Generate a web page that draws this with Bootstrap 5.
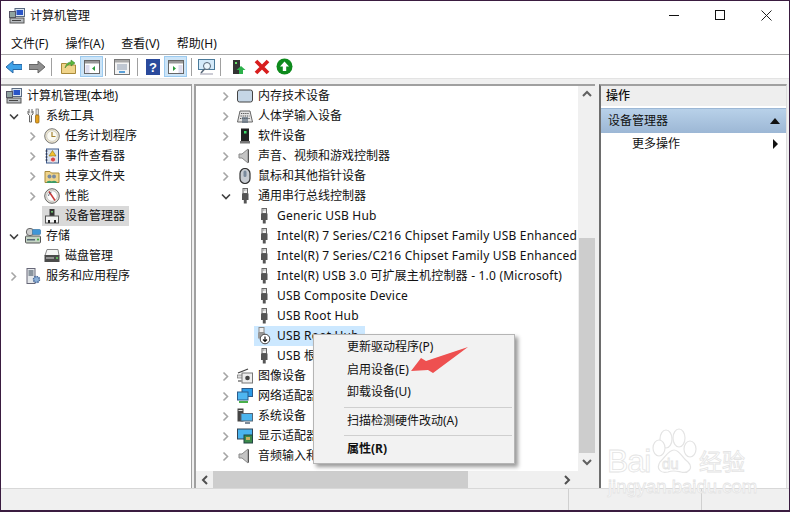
<!DOCTYPE html>
<html lang="zh-CN">
<head>
  <meta charset="UTF-8" />
  <title>计算机管理</title>
  <link href="https://cdn.jsdelivr.net/npm/bootstrap@5.3.0/dist/css/bootstrap.min.css" rel="stylesheet"/>
  <style>
    html, body { margin: 0; background: #fff; overflow: hidden; }
    body { font: 12px/20px "Noto Sans", "Noto Sans CJK SC", sans-serif; color: #111; }
    .win { position: relative; width: 790px; height: 512px; border: solid #3a1c40; border-width: 1px 1px 2px 1px; background: #fff; overflow: hidden; }
    svg { display: block; flex: none; }
    .title-bar { height: 31px; padding-bottom: 2px; }
    .title-ico { margin: 0 5px 0 8px; }
    .win-btns { margin-left: auto; }
    .win-btn { width: 46px; height: 29px; }
    .menu-bar { height: 21px; padding: 1px 0 0 10px; gap: 17px; border-bottom: 1px solid #aaa; box-sizing: content-box; }
    .tool-bar { height: 23px; padding-left: 4px; border-bottom: 1px solid #e3e3e3; box-sizing: content-box; }
    .t-sep { width: 1px; height: 18px; background: #a0a0a0; flex: none; }
    .t-on { width: 23px; height: 21px; background: #cce4f7; border: 1px solid #9ccbf0; flex: none; }
    .tm1 { margin-left: 1px; } .tm2 { margin-left: 2px; } .tm4 { margin-left: 4px; } .tm5 { margin-left: 5px; } .tm6 { margin-left: 6px; }
    .tm7 { margin-left: 7px; } .tm8 { margin-left: 8px; } .tm9 { margin-left: 9px; } .tm11 { margin-left: 11px; }
    .panes { height: 404px; padding-top: 5px; box-sizing: content-box; background: #f0f0f0; }
    .pane { background: #fff; border-top: 2px solid #a0a0a0; position: relative; flex: none; }
    .pane-l { width: 191px; border-right: 1px solid #a0a0a0; padding-left: 2px; }
    .pane-m { width: 401px; margin-left: 2px; border-left: 2px solid #a0a0a0; display: flex; flex-direction: column; }
    .pane-r { width: 188px; margin-left: 4px; border-left: 2px solid #6d6d6d; border-right: 1px solid #ddd; }
    .t-row { height: 20px; white-space: nowrap; }
    .twist { width: 16px; height: 20px; flex: none; }
    .r-l0 { padding-left: 3px; } .r-l1 { padding-left: 3px; } .r-l2 { padding-left: 22px; }
    .ico-gap { margin-left: 3px; margin-right: 5px; }
    .r-l0 .ico-gap { margin-left: 0; margin-right: 5px; }
    .sel-g { background: #d9d9d9; display: flex; align-items: center; height: 20px; margin-left: 1px; padding: 0 4px 0 2px; }
    .sel-g svg { margin-right: 5px; }
    .m-body { flex: 1; display: flex; min-height: 0; }
    .m-tree { flex: 1; overflow: hidden; }
    .r-p { padding-left: 22px; } .r-c { padding-left: 60px; }
    .c-wrap { display: flex; align-items: center; height: 20px; letter-spacing: .2px; }
    .c-wrap svg { margin-right: 5px; }
    .sel-b { background: #cce8ff; margin-left: -2px; padding: 0 4px 0 2px; width: 111px; }
    .v-bar { width: 17px; background: #f0f0f0; display: flex; flex-direction: column; align-items: center; }
    .v-up { height: 152px; padding-top: 4px; width: 100%; display: flex; justify-content: center; }
    .v-thumb { height: 215px; width: 16px; background: #cdcdcd; }
    .v-dn { padding-top: 5px; }
    .h-bar { height: 17px; background: #f0f0f0; display: flex; align-items: center; }
    .h-l { width: 17px; display: flex; justify-content: center; }
    .h-thumb { width: 255px; height: 17px; background: #cdcdcd; }
    .act-head { height: 20px; background: #eee; padding-left: 5px; font-weight: 500; margin-bottom: 2px; }
    .act-band { height: 25px; background: linear-gradient(#b8d1e9, #9cb7d5); padding: 0 6px 0 7px; border-top: 1px solid #9cb7d5; }
    .act-item { height: 22px; padding: 0 8px 0 31px; }
    .status { height: 22px; background: #f0f0f0; border-top: 1px solid #d8d8d8; }
    .st-a { width: 567px; } .st-b { width: 134px; border-left: 1px solid #d0d0d0; border-right: 1px solid #d0d0d0; }
    .ctx { position: absolute; left: 312px; top: 333px; width: 202px; height: 130px; background: #f2f2f2; border: 1px solid #b5b5b5; box-shadow: 3px 3px 4px rgba(0,0,0,.4); padding-top: 1px; }
    .ctx-it { padding-left: 33px; height: 22.5px; line-height: 22px; }
    .ctx-sep { height: 1px; background: #cfcfcf; margin: 3px 2px 2px 30px; }
    .ctx-b { font-weight: 700; }
    .red-arrow { position: absolute; left: 405px; top: 340px; }
    .wm { position: absolute; left: 603px; top: 425px; width: 150px; height: 70px; }
    .wm-t { position: absolute; color: #fff; -webkit-text-stroke: .8px #e4e4e4; font-family: "Liberation Sans", sans-serif; white-space: nowrap; }
    .wm-bai { left: 3px; top: 23px; font-size: 32px; line-height: 24px; letter-spacing: -1px; }
    .wm-du { left: 58px; top: 31px; font-size: 15px; line-height: 14px; }
    .wm-jy { left: 95px; top: 22px; font-size: 23px; line-height: 24px; font-family: "Noto Sans CJK SC", sans-serif; }
    .wm-url { left: 4px; top: 54px; font-size: 18.5px; line-height: 14px; }
    .wm-paw { position: absolute; left: 48px; top: 2px; }
  </style>
</head>
<body>
  <svg width="0" height="0" style="position:absolute">
    <defs>
      <symbol id="i-chev-r" viewBox="0 0 16 20"><path d="M5.5 6.500 9.500 10.500 5.500 14.500" fill="none" stroke="#a6a6a6" stroke-width="1.6"/></symbol>
      <symbol id="i-chev-d" viewBox="0 0 16 20"><path d="M4 8.500 8 12.500 12 8.500" fill="none" stroke="#404040" stroke-width="1.6"/></symbol>
      <symbol id="i-comp" viewBox="0 0 16 16"><rect x="6" y=".5" width="9.500" height="8" fill="#dfe8f2" stroke="#5a6a80"/><rect x="7.500" y="2" width="6.500" height="5" fill="#2a55c8"/><rect x=".5" y="3.500" width="6" height="6" fill="#8fa3a0" stroke="#556"/><rect x="1" y="10" width="14" height="5" fill="#b8bcc0" stroke="#555"/><rect x="3" y="12" width="9" height="1" fill="#444"/></symbol>
      <symbol id="i-tools" viewBox="0 0 16 16"><path d="M4 1v4M7 1v4M3 3v3l1.500 1.500V14h2V7.500L8 6V3" fill="#eee" stroke="#666"/><rect x="11" y="1" width="2.500" height="6" fill="#ddd" stroke="#777" stroke-width=".7"/><rect x="10.500" y="7" width="3.500" height="8" rx="1" fill="#e5a21e" stroke="#8a5c10" stroke-width=".7"/></symbol>
      <symbol id="i-clock" viewBox="0 0 16 16"><circle cx="8" cy="8" r="7.300" fill="#f0e8cf" stroke="#777"/><circle cx="8" cy="8" r="5.300" fill="#fbfaf2" stroke="#bbb" stroke-width=".6"/><path d="M8 4v4.500h3.500" fill="none" stroke="#a58432" stroke-width="1.200"/></symbol>
      <symbol id="i-event" viewBox="0 0 16 16"><rect x="2.500" y="1" width="12" height="14" fill="#dbe4f0" stroke="#3f5a8a"/><path d="M1.500 3h2M1.500 6h2M1.500 9h2M1.500 12h2" stroke="#223"/><path d="M8.500 2.500 12 8H5z" fill="#f2c230" stroke="#8a6a10" stroke-width=".6"/><circle cx="9" cy="11.500" r="2.500" fill="#d8484a" stroke="#fff" stroke-width=".7"/></symbol>
      <symbol id="i-share" viewBox="0 0 16 16"><path d="M1 3.500h5l1.500 1.500h7.500v9.500H1z" fill="#f0d48a" stroke="#a98a3a"/><circle cx="5.500" cy="8.500" r="2" fill="#7a8ba0"/><circle cx="10" cy="8.500" r="2" fill="#7a8ba0"/><path d="M2.500 15c0-3 6-3 6 0zM7 15c0-3 6-3 6 0z" fill="#3e9b68"/></symbol>
      <symbol id="i-perf" viewBox="0 0 16 16"><circle cx="8" cy="8" r="7.300" fill="#e6e4dc" stroke="#666"/><circle cx="8" cy="8" r="5.300" fill="#fff" stroke="#aaa" stroke-width=".6"/><path d="M5 3.500 11 12.500" stroke="#c93a3a" stroke-width="1.500"/><path d="M4.500 8a4 4 0 0 1 3-3.800" fill="none" stroke="#456" stroke-width=".8"/></symbol>
      <symbol id="i-dev" viewBox="0 0 16 16"><rect x="5.500" y="1" width="5" height="7" fill="#333"/><rect x="7.200" y="3" width="1.600" height="1.600" fill="#7d7"/><rect x="1.500" y="8" width="13" height="7" fill="#f4f4f4" stroke="#555"/><rect x="4" y="12" width="2" height="3" fill="#222"/><rect x="10" y="12" width="2" height="3" fill="#222"/></symbol>
      <symbol id="i-store" viewBox="0 0 16 16"><rect x=".5" y="8" width="15" height="7" rx="1" fill="#c4d4c4" stroke="#555"/><rect x="2" y="11" width="8" height="1.500" fill="#567"/><circle cx="13" cy="11.500" r="1" fill="#3a3"/><circle cx="5" cy="4" r="3.700" fill="#ccc" stroke="#666"/><rect x="7.500" y="1.500" width="8" height="5" rx="1" fill="#3f96d8" stroke="#2a6a9a" stroke-width=".6"/></symbol>
      <symbol id="i-disk" viewBox="0 0 16 16"><path d="M3 1.500h11l1 6H1z" fill="#f6f6f6" stroke="#888"/><rect x=".5" y="7" width="15" height="7" fill="#4b4b4b"/><rect x="2" y="9.500" width="8" height="1" fill="#ddd"/><circle cx="13" cy="10" r="1" fill="#6d6"/></symbol>
      <symbol id="i-serv" viewBox="0 0 16 16"><rect x="2" y=".5" width="8" height="15" fill="#e4e7ea" stroke="#667"/><path d="M3.500 3h5M3.500 5h5M3.500 7h5" stroke="#345"/><circle cx="11.500" cy="11.500" r="3" fill="#8bb0d8" stroke="#4a6a9a" stroke-width="1.500" stroke-dasharray="1.500 .8"/></symbol>
      <symbol id="i-mem" viewBox="0 0 16 16"><rect x=".5" y="2" width="15" height="12" rx="2" fill="#c5d6e6" stroke="#444"/></symbol>
      <symbol id="i-key" viewBox="0 0 16 16"><path d="M3 3h10l2.500 11H.5z" fill="#e4e4e4" stroke="#666"/><path d="M4 5.500h8M3.500 8h9M3 10.500h10" stroke="#555" stroke-dasharray="1.300 .8" stroke-width="1.200"/><rect x="5" y="9" width="6" height="6" fill="#567" opacity=".65"/></symbol>
      <symbol id="i-soft" viewBox="0 0 16 16"><rect x="4" y=".5" width="8" height="12.500" fill="#222"/><rect x="7" y="3" width="2.500" height="2.500" fill="#3ce06a"/><rect x="3" y="13" width="10" height="2.500" fill="#777"/></symbol>
      <symbol id="i-spk" viewBox="0 0 16 16"><path d="M2 6h3l6-5v14l-6-5H2z" fill="#c4c4c4" stroke="#888"/><path d="M11.500 1.500v13" stroke="#555"/></symbol>
      <symbol id="i-mouse" viewBox="0 0 16 16"><rect x="3" y=".5" width="10" height="15" rx="5" fill="#c8ccd2" stroke="#333" stroke-width="1.200"/><rect x="6.500" y="2.500" width="3" height="6.500" rx="1.500" fill="#7a8a9c"/></symbol>
      <symbol id="i-usb" viewBox="0 0 16 16"><rect x="6" y=".5" width="4.500" height="5" fill="#f0f0f0" stroke="#666"/><path d="M7 2h.8M8.600 2h.8" stroke="#666"/><path d="M5 5.500h6.500v6.500h-1.800v3.500H6.800v-3.500H5z" fill="#555"/></symbol>
      <symbol id="i-cam" viewBox="0 0 16 16"><path d="M1 5 11 1" stroke="#444" stroke-width="1.300"/><rect x=".5" y="7" width="7" height="3" fill="#ddd" stroke="#777" stroke-width=".7"/><rect x="5" y="5" width="10.500" height="10" fill="#eee" stroke="#777"/><circle cx="10.500" cy="10" r="2.300" fill="#444"/><rect x="1" y="12" width="4" height="2" fill="#999"/></symbol>
      <symbol id="i-net" viewBox="0 0 16 16"><rect x="5" y=".5" width="10.500" height="8" fill="#2a9be8" stroke="#2b5c8c"/><rect x=".5" y="4" width="10.500" height="8" fill="#4fb6f0" stroke="#2b5c8c"/><path d="M2 13h9v2H2z" fill="#4bb04b"/></symbol>
      <symbol id="i-sys" viewBox="0 0 16 16"><rect x=".5" y=".5" width="6" height="13" fill="#444"/><rect x="1.500" y="2" width="4" height="1" fill="#ddd"/><rect x="4" y="5.500" width="11.500" height="7.500" fill="#4ab4ee" stroke="#567"/><path d="M8 15h5" stroke="#567" stroke-width="1.500"/></symbol>
      <symbol id="i-disp" viewBox="0 0 16 16"><rect x=".5" y="1" width="15" height="10" fill="#4ab4ee" stroke="#345"/><rect x="7" y="7" width="8.500" height="8" fill="#3a8a4a" stroke="#244"/><rect x="9" y="9" width="4" height="3" fill="#c8b060"/></symbol>
    </defs>
  </svg>

  <div class="win">
    <div class="title-bar d-flex align-items-center">
      <svg class="title-ico" width="16" height="16"><use href="#i-comp"/></svg>
      <span>计算机管理</span>
      <div class="win-btns d-flex">
        <div class="win-btn d-flex align-items-center justify-content-center"><svg width="11" height="11"><path d="M0 5.500h10" stroke="#111"/></svg></div>
        <div class="win-btn d-flex align-items-center justify-content-center"><svg width="11" height="11"><rect x=".5" y=".5" width="9" height="9" fill="none" stroke="#111"/></svg></div>
        <div class="win-btn d-flex align-items-center justify-content-center"><svg width="11" height="11"><path d="M.5.500l10 10M10.500.500l-10 10" stroke="#222"/></svg></div>
      </div>
    </div>
    <div class="menu-bar d-flex align-items-center">
      <span>文件(F)</span><span>操作(A)</span><span>查看(V)</span><span>帮助(H)</span>
    </div>
    <div class="tool-bar d-flex align-items-center">
      <svg class="tm1" width="16" height="14"><path d="M0 7 7 1v3.500h9v5H7V13z" fill="#3fa2e8" stroke="#2a6aa8"/></svg>
      <svg class="tm7" width="16" height="14"><path d="M16 7 9 1v3.500H0v5h9V13z" fill="#8f8f8f" stroke="#666"/></svg>
      <div class="t-sep tm6"></div>
      <svg class="tm9" width="15" height="15"><path d="M.5 4.500h5l1 1.500h8v8.500H.5z" fill="#f0d48a" stroke="#a98a3a"/><path d="M4 9c1-4 3-6 6-6V1l4 3-4 3V5c-2 0-4 1-6 4z" fill="#5cb83c" stroke="#2f7a22" stroke-width=".5"/></svg>
      <div class="t-on tm4 d-flex align-items-center justify-content-center"><svg width="16" height="14"><rect x=".5" y=".5" width="15" height="13" fill="#fff" stroke="#666"/><rect x="1" y="1" width="14" height="2.500" fill="#999"/><rect x="1.500" y="5" width="4" height="8" fill="#dde"/><path d="M11 6v5L8 8.500z" fill="#2a9a3a"/></svg></div>
      <div class="t-sep tm2"></div>
      <svg class="tm8" width="16" height="16"><rect x=".5" y=".5" width="15" height="15" fill="#f4f4f4" stroke="#777"/><rect x="1" y="1" width="14" height="2.500" fill="#aaa"/><path d="M3 6h10M3 8h10M3 10h10" stroke="#8a9ab0"/><rect x="5" y="12" width="6" height="2" fill="#5aa0d8"/></svg>
      <div class="t-sep tm7"></div>
      <svg class="tm8" width="14" height="16"><rect width="14" height="16" fill="#2a4a9c"/><text x="7" y="13" text-anchor="middle" fill="#fff" font-family="Liberation Sans" font-weight="700" font-size="13">?</text></svg>
      <div class="t-on tm4 d-flex align-items-center justify-content-center"><svg width="16" height="14"><rect x=".5" y=".5" width="15" height="13" fill="#fff" stroke="#666"/><rect x="1" y="1" width="14" height="2.500" fill="#999"/><rect x="10.500" y="5" width="4" height="8" fill="#dde"/><path d="M5 6v5l3-2.500z" fill="#2a9a3a"/></svg></div>
      <div class="t-sep tm4"></div>
      <svg class="tm6" width="17" height="16"><rect x=".5" y=".5" width="16" height="10" fill="#d4eafa" stroke="#4a7a9a"/><circle cx="9" cy="7" r="3.500" fill="#eaf5fc" stroke="#567"/><path d="M6.500 10 3 14" stroke="#567" stroke-width="1.500"/><path d="M2 15h13" stroke="#99a"/></svg>
      <div class="t-sep tm5"></div>
      <svg class="tm11" width="14" height="16"><rect x="1" y="1" width="7" height="14" fill="#333"/><rect x="3" y="3" width="2" height="2" fill="#6d6"/><path d="M9 7l4.500 4H11v4H7v-4H4.500z" fill="#2cb04a"/></svg>
      <svg class="tm8" width="16" height="16"><path d="M2 2l12 12M14 2 2 14" stroke="#d81e1e" stroke-width="3.800"/></svg>
      <svg class="tm6" width="17" height="17"><circle cx="8.500" cy="8.500" r="8" fill="#0d8a1c"/><path d="M8.500 3.500l4.500 5h-2.800v4.500H6.800V8.500H4z" fill="#fff"/></svg>
    </div>

    <div class="panes d-flex">
      <div class="pane pane-l">
        <div class="t-row r-l0 d-flex align-items-center"><svg class="ico-gap" width="16" height="16"><use href="#i-comp"/></svg><span>计算机管理(本地)</span></div>
        <div class="t-row r-l1 d-flex align-items-center"><svg class="twist"><use href="#i-chev-d"/></svg><svg class="ico-gap" width="16" height="16"><use href="#i-tools"/></svg><span>系统工具</span></div>
        <div class="t-row r-l2 d-flex align-items-center"><svg class="twist"><use href="#i-chev-r"/></svg><svg class="ico-gap" width="16" height="16"><use href="#i-clock"/></svg><span>任务计划程序</span></div>
        <div class="t-row r-l2 d-flex align-items-center"><svg class="twist"><use href="#i-chev-r"/></svg><svg class="ico-gap" width="16" height="16"><use href="#i-event"/></svg><span>事件查看器</span></div>
        <div class="t-row r-l2 d-flex align-items-center"><svg class="twist"><use href="#i-chev-r"/></svg><svg class="ico-gap" width="16" height="16"><use href="#i-share"/></svg><span>共享文件夹</span></div>
        <div class="t-row r-l2 d-flex align-items-center"><svg class="twist"><use href="#i-chev-r"/></svg><svg class="ico-gap" width="16" height="16"><use href="#i-perf"/></svg><span>性能</span></div>
        <div class="t-row r-l2 d-flex align-items-center"><div class="twist"></div><div class="sel-g"><svg width="16" height="16"><use href="#i-dev"/></svg><span>设备管理器</span></div></div>
        <div class="t-row r-l1 d-flex align-items-center"><svg class="twist"><use href="#i-chev-d"/></svg><svg class="ico-gap" width="16" height="16"><use href="#i-store"/></svg><span>存储</span></div>
        <div class="t-row r-l2 d-flex align-items-center"><div class="twist"></div><svg class="ico-gap" width="16" height="16"><use href="#i-disk"/></svg><span>磁盘管理</span></div>
        <div class="t-row r-l1 d-flex align-items-center"><svg class="twist"><use href="#i-chev-r"/></svg><svg class="ico-gap" width="16" height="16"><use href="#i-serv"/></svg><span>服务和应用程序</span></div>
      </div>

      <div class="pane pane-m">
        <div class="m-body">
          <div class="m-tree">
            <div class="t-row r-p d-flex align-items-center"><svg class="twist"><use href="#i-chev-r"/></svg><svg class="ico-gap" width="16" height="16"><use href="#i-mem"/></svg><span>内存技术设备</span></div>
            <div class="t-row r-p d-flex align-items-center"><svg class="twist"><use href="#i-chev-r"/></svg><svg class="ico-gap" width="16" height="16"><use href="#i-key"/></svg><span>人体学输入设备</span></div>
            <div class="t-row r-p d-flex align-items-center"><svg class="twist"><use href="#i-chev-r"/></svg><svg class="ico-gap" width="16" height="16"><use href="#i-soft"/></svg><span>软件设备</span></div>
            <div class="t-row r-p d-flex align-items-center"><svg class="twist"><use href="#i-chev-r"/></svg><svg class="ico-gap" width="16" height="16"><use href="#i-spk"/></svg><span>声音、视频和游戏控制器</span></div>
            <div class="t-row r-p d-flex align-items-center"><svg class="twist"><use href="#i-chev-r"/></svg><svg class="ico-gap" width="16" height="16"><use href="#i-mouse"/></svg><span>鼠标和其他指针设备</span></div>
            <div class="t-row r-p d-flex align-items-center"><svg class="twist"><use href="#i-chev-d"/></svg><svg class="ico-gap" width="16" height="16"><use href="#i-usb"/></svg><span>通用串行总线控制器</span></div>
            <div class="t-row r-c"><div class="c-wrap"><svg width="16" height="16"><use href="#i-usb"/></svg><span>Generic USB Hub</span></div></div>
            <div class="t-row r-c"><div class="c-wrap"><svg width="16" height="16"><use href="#i-usb"/></svg><span>Intel(R) 7 Series/C216 Chipset Family USB Enhanced</span></div></div>
            <div class="t-row r-c"><div class="c-wrap"><svg width="16" height="16"><use href="#i-usb"/></svg><span>Intel(R) 7 Series/C216 Chipset Family USB Enhanced</span></div></div>
            <div class="t-row r-c"><div class="c-wrap"><svg width="16" height="16"><use href="#i-usb"/></svg><span>Intel(R) USB 3.0 可扩展主机控制器 - 1.0 (Microsoft)</span></div></div>
            <div class="t-row r-c"><div class="c-wrap"><svg width="16" height="16"><use href="#i-usb"/></svg><span>USB Composite Device</span></div></div>
            <div class="t-row r-c"><div class="c-wrap"><svg width="16" height="16"><use href="#i-usb"/></svg><span>USB Root Hub</span></div></div>
            <div class="t-row r-c"><div class="c-wrap sel-b">
              <svg width="16" height="18" viewBox="0 0 16 18"><rect x="3" y=".5" width="5" height="5" fill="#f0f0f0" stroke="#888"/><path d="M2 5.500h7v6H2z" fill="#999"/><circle cx="9" cy="12" r="4.800" fill="#fff" stroke="#444"/><path d="M9 9.500v5M7 12.500l2 2 2-2" fill="none" stroke="#111" stroke-width="1.200"/></svg><span>USB Root Hub</span></div></div>
            <div class="t-row r-c"><div class="c-wrap"><svg width="16" height="16"><use href="#i-usb"/></svg><span>USB 根集线器</span></div></div>
            <div class="t-row r-p d-flex align-items-center"><svg class="twist"><use href="#i-chev-r"/></svg><svg class="ico-gap" width="16" height="16"><use href="#i-cam"/></svg><span>图像设备</span></div>
            <div class="t-row r-p d-flex align-items-center"><svg class="twist"><use href="#i-chev-r"/></svg><svg class="ico-gap" width="16" height="16"><use href="#i-net"/></svg><span>网络适配器</span></div>
            <div class="t-row r-p d-flex align-items-center"><svg class="twist"><use href="#i-chev-r"/></svg><svg class="ico-gap" width="16" height="16"><use href="#i-sys"/></svg><span>系统设备</span></div>
            <div class="t-row r-p d-flex align-items-center"><svg class="twist"><use href="#i-chev-r"/></svg><svg class="ico-gap" width="16" height="16"><use href="#i-disp"/></svg><span>显示适配器</span></div>
            <div class="t-row r-p d-flex align-items-center"><svg class="twist"><use href="#i-chev-r"/></svg><svg class="ico-gap" width="16" height="16"><use href="#i-spk"/></svg><span>音频输入和输出</span></div>
          </div>
          <div class="v-bar">
            <div class="v-up"><svg width="10" height="8"><path d="M1 6l4-4 4 4" fill="none" stroke="#606060" stroke-width="2"/></svg></div>
            <div class="v-thumb"></div>
            <div class="v-dn"><svg width="10" height="8"><path d="M1 2l4 4 4-4" fill="none" stroke="#606060" stroke-width="2"/></svg></div>
          </div>
        </div>
        <div class="h-bar">
          <div class="h-l"><svg width="8" height="10"><path d="M6 1 2 5l4 4" fill="none" stroke="#505050" stroke-width="2"/></svg></div>
          <div class="h-thumb"></div>
          <div class="ms-auto me-4"><svg width="8" height="10"><path d="M2 1l4 4-4 4" fill="none" stroke="#505050" stroke-width="2"/></svg></div>
        </div>
      </div>

      <div class="pane pane-r">
        <div class="act-head d-flex align-items-center">操作</div>
        <div class="act-band d-flex align-items-center justify-content-between"><span>设备管理器</span><svg width="10" height="6"><path d="M5 0l5 6H0z" fill="#111"/></svg></div>
        <div class="act-item d-flex align-items-center justify-content-between"><span>更多操作</span><svg width="5" height="10"><path d="M0 0l5 5-5 5z" fill="#111"/></svg></div>
      </div>
    </div>

    <div class="status d-flex"><div class="st-a"></div><div class="st-b"></div></div>

    <div class="ctx">
      <div class="ctx-it">更新驱动程序(P)</div>
      <div class="ctx-it">启用设备(E)</div>
      <div class="ctx-it">卸载设备(U)</div>
      <div class="ctx-sep"></div>
      <div class="ctx-it">扫描检测硬件改动(A)</div>
      <div class="ctx-sep"></div>
      <div class="ctx-it ctx-b">属性(R)</div>
    </div>

    <svg class="red-arrow" width="70" height="40"><path d="M5 30 15 17 20 20 62 6 27 32 22 29z" fill="#ee5050"/></svg>

    <div class="wm">
      <span class="wm-t wm-bai">Bai</span>
      <svg class="wm-paw" width="46" height="46" fill="#fff" stroke="#e4e4e4" stroke-width="1.2"><ellipse cx="14" cy="11" rx="6" ry="9"/><ellipse cx="27" cy="10" rx="6" ry="9"/><ellipse cx="7" cy="20" rx="6" ry="8"/><ellipse cx="38" cy="21" rx="6" ry="8"/><path d="M22 22c6 0 8 8 14 12 6 6 0 12-7 10-5-1-8-2-13 0-8 2-12-4-8-10 5-4 8-12 14-12z"/></svg>
      <span class="wm-t wm-du">du</span>
      <span class="wm-t wm-jy">经验</span>
      <span class="wm-t wm-url">jingyan.baidu.com</span>
    </div>
  </div>
</body>
</html>
